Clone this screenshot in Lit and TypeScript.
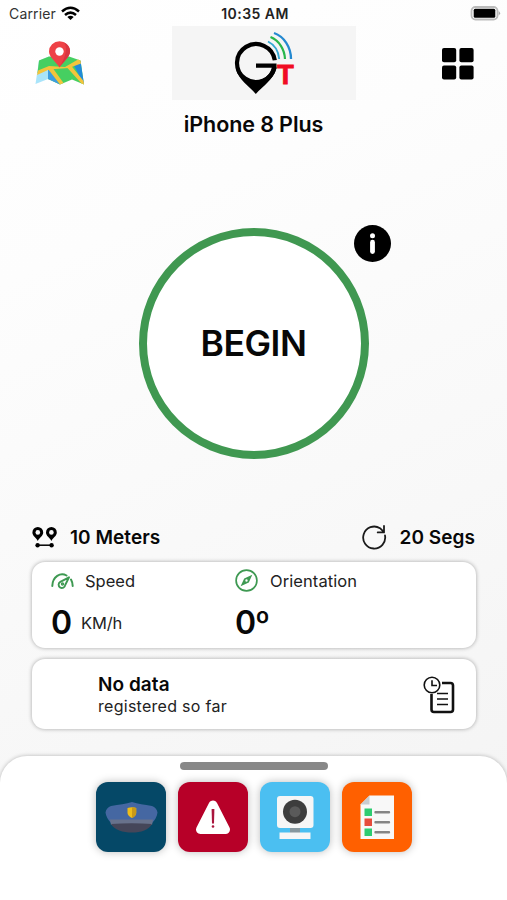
import { LitElement, html, css, svg } from "lit";
import { customElement } from "lit/decorators.js";

const mapIcon = html`<svg width="50" height="46" viewBox="0 0 50 46">
  <path d="M4 19.500 14 15.500 13 38 .5 43z" fill="#a9e4fa"/>
  <path d="M4 19.500 14 15.500H34L45.500 19.500 49 43.500 37 38.500 25 43.500 13 38 13 28 2.500 32z" fill="#46cf61"/>
  <path d="M13 27 25 43.500 13 38z" fill="#3d9de0"/>
  <path d="M38 23 45.500 20 49 43.500z" fill="#228bd8"/>
  <path d="M2 34 3 29.500 14 25 30 26 43 18.500 45.500 19.500 46 22.500 34 27 20 28 13 29z" fill="#f4c43c"/>
  <path d="M13 28 17 26 28.500 42 25 43.500zM32 26.500 36 24.500 48.500 40 49 43.500 46.500 42.500z" fill="#f4c43c"/>
  <path d="M24.500 26.500C20 20 14 16 14 10.600A10.500 10.300 0 0 1 35 10.600C35 16 29 20 24.500 26.500z" fill="#ee4246"/>
  <path d="M29 1.300A10.500 10.300 0 0 1 35 10.600C35 16 29 20 24.500 26.500 31 15 33 7 29 1.300z" fill="#d93640"/>
  <circle cx="24.500" cy="10.500" r="4.200" fill="#fff"/>
</svg>`;

const logo = html`<svg width="184" height="74" viewBox="0 0 184 74">
  <path d="M102.800 34.200A19 19 0 1 0 102.600 41" fill="none" stroke="#000" stroke-width="4.200"/>
  <path d="M63.800 43C67 54 77 60 83.800 68 91 60 101 54 104.500 42.500V37.600H84V41.800H99.800A16.800 16.800 0 0 1 67 41z" fill="#000"/>
  <g fill="none">
    <path d="M96 15.500C102 18.500 106.500 25 107.200 33" stroke="#35a8d3" stroke-width="1.900"/>
    <path d="M98.500 11C107 14.500 112.500 23 113 33" stroke="#27b64b" stroke-width="2.200"/>
    <path d="M102 7C112 10.500 119 21 119 33" stroke="#2489d0" stroke-width="2.300"/>
  </g>
  <text x="113.300" y="57.700" text-anchor="middle" class="tee">T</text>
</svg>`;

const wifi = html`<svg width="19" height="15" viewBox="0 0 19 15">
  <g fill="none" stroke="#000" stroke-width="2.500"><path d="M1 5.500Q9.500-2 18 5.500M4 9Q9.500 4.200 15 9"/></g>
  <path d="M6.300 11Q9.500 8.300 12.700 11L9.500 14z"/>
</svg>`;

const battery = html`<svg width="31" height="15" viewBox="0 0 31 15">
  <rect x="1.500" y="1" width="26" height="12.500" rx="4" fill="#fff" stroke="#bbb" stroke-width="1.800"/>
  <rect x="3.700" y="2.800" width="21.600" height="8.900" rx="1.500"/>
  <path d="M28.700 5Q31.500 7.300 28.700 9.500z" fill="#aaa"/>
</svg>`;

const gridIcon = html`<svg width="32" height="32" viewBox="0 0 32 32">
  ${[0, 17.4].map(x => [0, 17.4].map(y => svg`<rect x=${x} y=${y} width="14.200" height="14.200" rx="2"/>`))}
</svg>`;

const infoIcon = html`<svg width="37" height="37" viewBox="0 0 37 37">
  <circle cx="18.500" cy="18.500" r="18.500"/>
  <circle cx="18.500" cy="10.800" r="2.500" fill="#fff"/>
  <path d="M18.500 17.200V26.500" stroke="#fff" stroke-width="4.800" stroke-linecap="round"/>
</svg>`;

const pins = html`<svg width="26" height="21" viewBox="0 0 26 21">
  ${[5.8, 19.4].map(x => svg`<g transform="translate(${x} 0)"><path d="M0 14C-1.500 10.500-5.400 9-5.400 5.400A5.400 5.400 0 0 1 5.400 5.400C5.400 9 1.500 10.500 0 14z"/><circle cy="5.400" r="2.300" fill="#f7f7f7"/></g>`)}
  <path d="M5.500 18.200H20" stroke="#000" stroke-width="1.500"/>
  <circle cx="5.600" cy="18.200" r="2.200"/><circle cx="19.600" cy="18.200" r="2.200"/>
</svg>`;

const refresh = html`<svg width="25" height="25" viewBox="0 0 25 25" fill="none" stroke="#1a1a1a" stroke-width="1.800" stroke-linecap="round" stroke-linejoin="round">
  <path d="M23 10.500A11 11 0 1 1 18 3.200L22 7.200M22 1V7.400H15.700"/>
</svg>`;

const gauge = html`<svg width="23" height="16" viewBox="0 0 23 16" fill="none" stroke="#3e9952" stroke-width="2" stroke-linecap="round">
  <path d="M1.300 13C1.500 3.500 9.500-1 15.500 2.500M20 6.500Q21.500 9 21.700 13"/>
  <path d="M18 4.300 9.300 8.800A3.300 3.300 0 1 0 14.200 12z" stroke-linejoin="round" stroke-width="1.900"/>
  <circle cx="11.500" cy="11" r=".7"/>
</svg>`;

const compass = html`<svg width="23" height="23" viewBox="0 0 23 23">
  <circle cx="11.500" cy="11.500" r="10.400" fill="none" stroke="#3e9952" stroke-width="1.700"/>
  <path fill="#3e9952" fill-rule="evenodd" d="M17.300 5.800 13.800 13.500 5.600 17.300 9.200 9.500zM11.500 10.300A1.200 1.200 0 1 0 11.500 12.700A1.200 1.200 0 1 0 11.500 10.300z"/>
</svg>`;

const history = html`<svg width="32" height="38" viewBox="0 0 32 38" fill="none" stroke="#111">
  <path d="M19 7H27.500A2.500 2.500 0 0 1 30 9.500V33.500A2.500 2.500 0 0 1 27.500 36H11A2.500 2.500 0 0 1 8.500 33.500V18" stroke-width="2.600"/>
  <circle cx="9" cy="9" r="7.800" stroke-width="1.600"/>
  <path d="M9 4.200V9.500H14" stroke-width="1.600"/>
  <path d="M14 17.500H25M14 23H25M14 28.500H25" stroke-width="1.600"/>
</svg>`;

const tiles = [
  { tone: "navy", art: svg`
    <path d="M9.500 30.500C10 27.500 12 25 15 24 23 22.500 30 22 36 20 42 22 48 22.500 56 24 59 25 61 27.500 61.500 30.500 61 35 59 38 56 41H15C12 38 10 34 9.500 30.500z" fill="#4567a2"/>
    <path d="M14 37.500H57L56 43H15z" fill="#68728c"/>
    <path d="M15 42Q36 40.500 56 42C53 48 45 50.500 36 50.500S18 48 15 42z" fill="#454659"/>
    <path d="M31.500 26Q36 24.500 40.200 26V31Q40 34 36 36 31.800 34 31.500 31z" fill="#efbd18"/>
    <path d="M36 25.200Q39 25.300 40.200 26V31Q40 34 36 36z" fill="#c99918"/>` },
  { tone: "crimson", art: svg`
    <path d="M35 23 22.500 47.500H47.500z" fill="#fff" stroke="#fff" stroke-width="9" stroke-linejoin="round"/>
    <path d="M33.600 27H36.400L36 41.500H34z" fill="#a9153d"/><circle cx="35" cy="44.500" r="1.300" fill="#a9153d"/>` },
  { tone: "sky", art: svg`
    <path d="M30 45H40V52H30z" fill="#87979e"/>
    <rect x="17" y="14" width="36.500" height="32" rx="3" fill="#f6f6f6"/>
    <circle cx="35" cy="29.700" r="12" fill="#3d3d3d"/><circle cx="35" cy="29.700" r="5.500" fill="#5a5a5a"/>
    <path d="M19.500 50.500H50.500V57H19.500z" fill="#f6f6f6"/>` },
  { tone: "orange", art: svg`
    <path d="M27.500 13.500H52V57H18.500V22.500z" fill="#f8f8f8"/><path d="M27.500 13.500V22.500H18.500z" fill="#c8ccd0"/>
    <path d="M22.500 26.500h7.500v7.500h-7.500zM22.500 46.500h7.500v7.500h-7.500z" fill="#2ecc71"/>
    <path d="M22.500 36.500h7.500v7.500h-7.500z" fill="#e64c3c"/>
    <path d="M33.500 30.300H47M33.500 40.300H47M33.500 50.300H47" stroke="#858585" stroke-width="2.400" stroke-linecap="round"/>` },
];

@customElement("app-root")
export class AppRoot extends LitElement {
  static styles = css`
    :host { display: block; }
    * { box-sizing: border-box; }
    svg { display: block; flex: none; }
    .screen { width: 507px; height: 900px; overflow: hidden; display: flex; flex-direction: column; color: #080808; font-family: Inter, "Liberation Sans", sans-serif; white-space: nowrap; background: linear-gradient(155deg, #fff 0%, #fdfdfd 25%, #f3f3f3 100%); }
    .status { height: 26px; display: grid; grid-template-columns: 1fr auto 1fr; align-items: center; padding: 1px 6px 0 9px; font-size: 14px; line-height: 20px; color: #333; }
    .carrier { display: flex; align-items: center; gap: 5px; letter-spacing: .15px; }
    .time { font-weight: 600; color: #222; letter-spacing: .45px; }
    .battery { justify-self: end; }
    .header { height: 74px; display: grid; grid-template-columns: 137px 184px 1fr; padding-left: 35px; }
    .map { padding-top: 15px; }
    .logo { background: #f5f5f5; }
    .menu { justify-self: end; padding: 22px 33px 0 0; }
    .tee { font: 700 27.5px "Liberation Sans", sans-serif; fill: #f00c22; stroke: #f00c22; stroke-width: .8px; }
    .device { height: 48px; line-height: 49px; text-align: center; font-size: 21.5px; font-weight: 600; letter-spacing: -.1px; }
    .stage { height: 373px; display: grid; justify-items: center; padding: 80px 0 0; }
    .dial { position: relative; width: 230px; height: 231px; }
    .begin { width: 230px; height: 231px; border: 8px solid #409851; border-radius: 50%; background: #fff; display: grid; place-items: center; font-size: 35.5px; font-weight: 600; letter-spacing: -.5px; }
    .info { position: absolute; left: 215px; top: -3px; }
    .limits { height: 41px; display: flex; justify-content: space-between; align-items: center; padding: 0 32px 9px; font-size: 19px; font-weight: 600; letter-spacing: .05px; }
    .limit { display: flex; align-items: center; gap: 12px; }
    .limit + .limit { gap: 13px; }
    .card { margin: 0 31px 0 32px; border-radius: 13px; background: #fff; box-shadow: 0 0 4px #0005; }
    .metrics { height: 86px; display: grid; grid-template-columns: 184px 1fr; padding: 7px 19px 0; }
    .label { display: flex; align-items: center; gap: 11px; height: 23px; font-size: 16.5px; color: #222; }
    .label.wide { gap: 12px; letter-spacing: .08px; }
    .reading { display: flex; align-items: center; gap: 10px; margin-top: 11px; line-height: 40px; font-size: 32px; font-weight: 600; letter-spacing: -1px; }
    .unit { font-size: 16.5px; font-weight: 400; letter-spacing: -.2px; color: #222; }
    .record { height: 70px; margin-top: 11px; display: flex; justify-content: space-between; padding: 14px 21px 0 66px; }
    .state { font-size: 19px; line-height: 23px; font-weight: 600; letter-spacing: .05px; }
    .detail { font-size: 16px; line-height: 21px; letter-spacing: .28px; color: #222; }
    .history { padding-top: 3px; }
    .sheet { flex: 1; margin-top: 27px; background: #fff; border-radius: 27px 27px 0 0; box-shadow: 0 0 4px #0004; display: flex; flex-direction: column; align-items: center; padding-top: 6px; }
    .handle { width: 148px; height: 8px; border-radius: 4px; background: #888; }
    .tiles { display: flex; gap: 12px; margin-top: 12px; }
    .tile { width: 70px; height: 70px; border-radius: 12px; overflow: hidden; box-shadow: 0 0 8px #0004; }
    .navy { background: #054867; }
    .crimson { background: #b70028; }
    .sky { background: #4bbff1; }
    .orange { background: #ff6000; }
  `;

  render() {
    return html`<main class="screen">
      <div class="status">
        <div class="carrier"><span>Carrier</span>${wifi}</div>
        <div class="time">10:35 AM</div>
        <div class="battery">${battery}</div>
      </div>
      <header class="header">
        <div class="map">${mapIcon}</div><div class="logo">${logo}</div><div class="menu">${gridIcon}</div>
      </header>
      <div class="device">iPhone 8 Plus</div>
      <section class="stage"><div class="dial">
        <div class="begin">BEGIN</div><div class="info">${infoIcon}</div>
      </div></section>
      <div class="limits">
        <div class="limit">${pins}<span>10 Meters</span></div>
        <div class="limit">${refresh}<span>20 Segs</span></div>
      </div>
      <section class="card metrics">
        <div><div class="label">${gauge}<span>Speed</span></div><div class="reading"><span>0</span><span class="unit">KM/h</span></div></div>
        <div><div class="label wide">${compass}<span>Orientation</span></div><div class="reading">0º</div></div>
      </section>
      <section class="card record">
        <div><div class="state">No data</div><div class="detail">registered so far</div></div>
        <div class="history">${history}</div>
      </section>
      <nav class="sheet">
        <div class="handle"></div>
        <div class="tiles">${tiles.map(t => html`<div class="tile ${t.tone}"><svg width="70" height="70" viewBox="0 0 70 70">${t.art}</svg></div>`)}</div>
      </nav>
    </main>`;
  }
}
